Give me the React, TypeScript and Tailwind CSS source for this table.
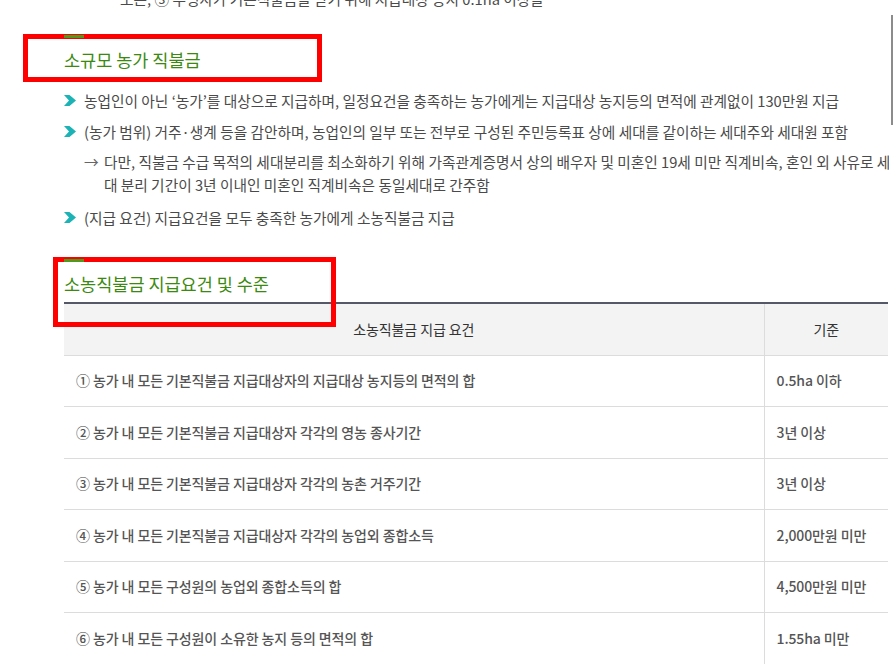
const font = { fontFamily: '"Noto Sans CJK KR", "Noto Sans", sans-serif' };

interface Row {
  label: string;
  value: string;
}

const rows: Row[] = [
  { label: "① 농가 내 모든 기본직불금 지급대상자의 지급대상 농지등의 면적의 합", value: "0.5ha 이하" },
  { label: "② 농가 내 모든 기본직불금 지급대상자 각각의 영농 종사기간", value: "3년 이상" },
  { label: "③ 농가 내 모든 기본직불금 지급대상자 각각의 농촌 거주기간", value: "3년 이상" },
  { label: "④ 농가 내 모든 기본직불금 지급대상자 각각의 농업외 종합소득", value: "2,000만원 미만" },
  { label: "⑤ 농가 내 모든 구성원의 농업외 종합소득의 합", value: "4,500만원 미만" },
  { label: "⑥ 농가 내 모든 구성원이 소유한 농지 등의 면적의 합", value: "1.55ha 미만" },
];

const Chevron = () => (
  <svg width="13" height="11" viewBox="0 0 13 11" className="shrink-0">
    <polygon points="0,0 5.5,0 12,5.5 5.5,11 0,11 5,5.5" fill="#1bb3b6" />
  </svg>
);

const Bullet = ({ children, className }: { children: React.ReactNode; className?: string }) => (
  <div className={`flex items-center gap-[7px] leading-[23px] ${className ?? ""}`}>
    <Chevron />
    <span className="whitespace-nowrap">{children}</span>
  </div>
);

const SectionTitle = ({ title }: { title: string }) => (
  <div className="relative z-10">
    <div className="h-[3px] w-[20px] bg-[#4f9a1c]" />
    <h3 className="mt-[10px] text-[17.5px] leading-[24px] text-[#3b8a0f]">{title}</h3>
  </div>
);

export default function App() {
  return (
    <div className="flex h-[664px] w-[893px] overflow-hidden bg-white" style={font}>
      <div className="relative flex-1 overflow-hidden">
        {/* annotation boxes */}
        <div className="absolute left-[23px] top-[34px] h-[48px] w-[299px] border-[5px] border-[#ff0000]" />
        <div className="absolute left-[53px] top-[257px] h-[70px] w-[283px] border-[5px] border-[#ff0000]" />

        <div className="pl-[64px] text-[14.7px] text-[#4a4a4a]">
          <p className="-mt-[11px] pl-[56px] leading-[20px] whitespace-nowrap">
            모든, ③ 수령자가 기본직불금을 받기 위해 지급대상 농지 0.1ha 이상을
          </p>

          <div className="mt-[26px]">
            <SectionTitle title="소규모 농가 직불금" />
          </div>

          <Bullet className="mt-[17px]">
            농업인이 아닌 ‘농가’를 대상으로 지급하며, 일정요건을 충족하는 농가에게는 지급대상 농지등의 면적에 관계없이 130만원 지급
          </Bullet>
          <Bullet className="mt-[8px]">
            (농가 범위) 거주·생계 등을 감안하며, 농업인의 일부 또는 전부로 구성된 주민등록표 상에 세대를 같이하는 세대주와 세대원 포함
          </Bullet>
          <div className="mt-[7px] flex pl-[20px] leading-[23px]">
            <span className="w-[20px] shrink-0 text-[#666]">→</span>
            <p className="whitespace-nowrap">
              다만, 직불금 수급 목적의 세대분리를 최소화하기 위해 가족관계증명서 상의 배우자 및 미혼인 19세 미만 직계비속, 혼인 외 사유로 세
              <br />
              대 분리 기간이 3년 이내인 미혼인 직계비속은 동일세대로 간주함
            </p>
          </div>
          <Bullet className="mt-[10px]">(지급 요건) 지급요건을 모두 충족한 농가에게 소농직불금 지급</Bullet>

          <div className="mt-[30px]">
            <SectionTitle title="소농직불금 지급요건 및 수준" />
          </div>

          <table className="mt-[6px] w-[824px] table-fixed border-collapse border-t-2 border-[#555866] text-[14px] tracking-[-0.1px]">
            <colgroup>
              <col className="w-[700px]" />
              <col className="w-[124px]" />
            </colgroup>
            <thead>
              <tr className="h-[52px] bg-[#f3f3f3] text-[#333]">
                <th className="border-b border-r border-[#dcdcdc] font-normal">소농직불금 지급 요건</th>
                <th className="border-b border-[#dcdcdc] font-normal">기준</th>
              </tr>
            </thead>
            <tbody>
              {rows.map((row) => (
                <tr key={row.label} className="h-[51.5px] text-[#555]">
                  <td className="border-b border-r border-[#dcdcdc] px-[12px] font-medium">{row.label}</td>
                  <td className="border-b border-[#dcdcdc] px-[12px] font-medium">{row.value}</td>
                </tr>
              ))}
            </tbody>
          </table>
        </div>
      </div>
      <div className="w-[4px] shrink-0 bg-white">
        <div className="ml-auto mt-[15px] h-[110px] w-[2px] bg-[#8c8c8c]" />
      </div>
    </div>
  );
}
